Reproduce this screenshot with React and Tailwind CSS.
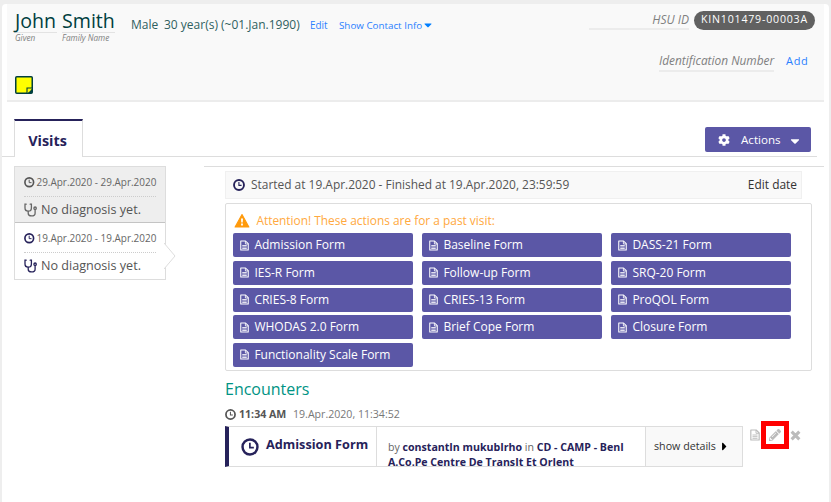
import React from 'react';
import { FaPencilAlt, FaCog, FaCaretDown, FaCaretRight } from 'react-icons/fa';

function Clock({ className, stroke = 2.2 }) {
  return (
    <svg viewBox="0 0 14 14" className={`shrink-0 ${className}`} fill="none" stroke="currentColor" strokeWidth={stroke}>
      <circle cx="7" cy="7" r="5.8" />
      <path d="M6.9 3.6V7.5H10" strokeWidth="1.3" />
    </svg>
  );
}

function FileText({ className }) {
  return (
    <svg viewBox="0 0 12 14" className={className} fill="none" stroke="currentColor" strokeWidth="1.4">
      <path d="M1 1h6.4L11 4.6V13H1z" strokeLinejoin="round" />
      <path d="M7.2 1v4H11M3 7h6M3 9h6M3 11h6" strokeWidth="1.1" />
    </svg>
  );
}

function Stethoscope({ className }) {
  return (
    <svg viewBox="0 0 13 14" className={`shrink-0 ${className}`} fill="none" stroke="currentColor" strokeWidth="1.3" strokeLinecap="round">
      <path d="M2.2 1.2H1V5a3.2 3.2 0 0 0 6.4 0V1.2H6.2" />
      <path d="M4.2 8.4v1.8c0 1.7 1.2 2.7 3.3 2.7s3.6-1 3.6-2.7V6.6" />
      <circle cx="11.1" cy="5.2" r="1.2" />
    </svg>
  );
}

function Cross({ className }) {
  return (
    <svg viewBox="0 0 12 12" className={className} fill="none" stroke="currentColor" strokeWidth="3.4">
      <path d="M1.8 1.8 10.2 10.2M10.2 1.8 1.8 10.2" />
    </svg>
  );
}

function Warning({ className }) {
  return (
    <svg viewBox="0 0 15 14" className={className}>
      <path d="M7.5.6 14.4 13H.6z" fill="#ff9a0c" stroke="#ff9a0c" strokeWidth="1.1" strokeLinejoin="round" />
      <path d="M6.5 4.4h2l-.3 4.2H6.8zM6.6 9.6h1.8v1.8H6.6z" fill="#fff" />
    </svg>
  );
}

function Note() {
  return (
    <svg viewBox="0 0 18 18" className="block size-[18px]">
      <rect x="0.75" y="0.75" width="16.5" height="16.5" rx="1" fill="#ff0" stroke="#003f3f" strokeWidth="1.5" />
      <path d="M17 12h-5v5" fill="#ff0" stroke="#003f3f" strokeWidth="1.1" />
      <path d="M17 13v4h-4z" fill="#003f3f" />
    </svg>
  );
}

const forms = [
  'Admission Form', 'Baseline Form', 'DASS-21 Form',
  'IES-R Form', 'Follow-up Form', 'SRQ-20 Form',
  'CRIES-8 Form', 'CRIES-13 Form', 'ProQOL Form',
  'WHODAS 2.0 Form', 'Brief Cope Form', 'Closure Form',
  'Functionality Scale Form',
];

function Header() {
  return (
    <header className="mx-[5px] flex h-[98px] justify-between border-b-2 border-[#ececec] bg-[#f9f9f9] pl-[7px]">
      <div className="flex flex-col">
        <div className="flex h-[72px] whitespace-nowrap text-[#003f3f]">
          <div className="mr-[5px] w-[43px] pt-[4px]">
            <div className="h-[25px] border-b border-[#e3e3e3] pl-px text-[19.6px] leading-[25px]">John</div>
            <div className="pl-px text-[8.2px] leading-[9px] text-[#808080] italic">Given</div>
          </div>
          <div className="w-[53px] pt-[4px]">
            <div className="h-[25px] border-b border-[#e3e3e3] text-[19.6px] leading-[25px]">Smith</div>
            <div className="text-[8.2px] leading-[9px] text-[#808080] italic">Family Name</div>
          </div>
          <div className="flex h-[30px] items-baseline pt-[12px] pl-[16px] text-[12px] leading-[18px] text-[#2f5f5f]">
            <span className="w-[33px]">Male</span>
            <span className="w-[146px]">30 year(s) (~01.Jan.1990)</span>
            <span className="w-[29px] text-[9.9px] text-[#2a7fff]">Edit</span>
            <span className="w-[84px] text-[9.8px] text-[#2a7fff]">Show Contact Info</span>
            <FaCaretDown className="-ml-px size-[12px] self-center text-[#007fff]" />
          </div>
        </div>
        <div className="pl-px"><Note /></div>
      </div>
      <div className="flex w-[240px] flex-col pr-[9px]">
        <div className="mt-[6px] flex items-center justify-end gap-[5px]">
          <div className="h-[20px] w-[100px] border-b-2 border-[#ececec] text-right text-[12px] leading-[20px] text-[#808080] italic">HSU ID</div>
          <div className="flex h-[19px] w-[121px] items-center justify-center rounded-full bg-[#616161] text-[10.6px] font-medium tracking-[0.8px] text-white">KIN101479-00003A</div>
        </div>
        <div className="mt-[20px] flex justify-end gap-[12px] pr-[7px] leading-[20px]">
          <div className="h-[22px] w-[115px] border-b-2 border-[#ececec] text-[11.9px] leading-[20px] whitespace-nowrap text-[#808080] italic">Identification Number</div>
          <div className="w-[22px] pt-[1px] text-[11px] tracking-[0.7px] text-[#2a7fff]">Add</div>
        </div>
      </div>
    </header>
  );
}

function Visit({ date, active }) {
  return (
    <div className={active ? 'relative h-[56px] bg-white px-[9px] text-[#26225a]' : 'h-[56px] border-b border-[#c4c4c4] bg-[#eee] px-[9px] text-[#666]'}>
      <div className="flex h-[30px] items-center gap-[2px] border-b border-dotted border-[#ccc] pt-[2px] text-[9.95px] text-[#666]">
        <Clock className={active ? 'size-[10.5px] text-[#26225a]' : 'size-[10.5px] text-[#555]'} />
        <span className="whitespace-nowrap">{date}</span>
      </div>
      <div className="flex h-[26px] items-center gap-[4px] text-[12.6px] text-[#555]">
        <Stethoscope className={active ? 'h-[14px] w-[13px] text-[#26225a]' : 'h-[14px] w-[13px] text-[#666]'} />
        <span className="pt-px">No diagnosis yet.</span>
      </div>
      {active && (
        <svg viewBox="0 0 12 28" className="absolute top-[19px] -right-[11px] h-[28px] w-[12px]">
          <path d="M0 1 11 14 0 27" fill="#fff" stroke="#ddd" />
        </svg>
      )}
    </div>
  );
}

function Encounter() {
  return (
    <div className="flex">
      <div className="flex h-[41px] w-[518px] overflow-hidden border border-l-[4px] border-[#ddd] border-l-[#26225a]">
        <div className="flex w-[148px] items-center border-r border-[#ddd] pl-[12px] text-[#26225a]">
          <Clock className="size-[18px]" stroke={1.9} />
          <span className="-mt-[4px] ml-[7px] text-[12.7px] font-bold whitespace-nowrap">Admission Form</span>
        </div>
        <div className="w-[268px] pt-[13px] pl-[11px] text-[10.6px] leading-[15px] whitespace-nowrap text-[#666]">
          <div>by <b className="text-[#26225a]">constantIn mukubIrho</b> in <b className="text-[#26225a]">CD - CAMP - BenI</b></div>
          <div><b className="text-[#26225a]">A.Co.Pe Centre De TransIt Et OrIent</b></div>
        </div>
        <div className="flex flex-1 items-center border-l border-[#ddd] bg-[#f9f9f9] pl-[8px] text-[10.7px] text-[#333]">
          <span className="w-[64px] whitespace-nowrap">show details</span>
          <FaCaretRight className="size-[13px] text-black" />
        </div>
      </div>
      <div className="-mt-[5px] ml-[7px] flex h-[28px] items-center text-[#bbb]">
        <FileText className="h-[12px] w-[10px]" />
        <div className="ml-[1px] flex h-[28px] w-[28px] items-center justify-center border-[5px] border-[#f00]">
          <FaPencilAlt className="size-[12px]" />
        </div>
        <Cross className="ml-[1px] size-[11px]" />
      </div>
    </div>
  );
}

export default function App() {
  return (
    <div className="h-[502px] w-[831px] overflow-hidden bg-[#eee] pt-[4px] pl-[2px] font-['Open_Sans','Noto_Sans',sans-serif]">
      <div className="h-[498px] w-[827px] rounded-t-[4px] bg-white">
        <Header />
        <div className="mt-[17px] flex h-[38px]">
          <div className="w-[12px] border-b border-[#ddd]" />
          <div className="flex w-[69px] items-center justify-center border-t-2 border-r border-l border-[#ddd] border-t-[#26225a] pt-[3px] pr-[2px] text-[14.4px] font-bold text-[#26225a]">Visits</div>
          <div className="flex w-[734px] justify-end border-b border-[#ddd] pr-[6px]">
            <div className="mt-[8px] flex h-[25px] w-[106px] items-center rounded-[2px] bg-[#5b57a6] pl-[13px] text-white">
              <FaCog className="size-[12px]" />
              <span className="ml-[11px] w-[47px] text-[11.6px]">Actions</span>
              <FaCaretDown className="mt-[2px] size-[14px]" />
            </div>
          </div>
        </div>
        <div className="flex pt-[9px] pl-[12px]">
          <aside className="h-[114px] w-[152px] border border-[#ddd]">
            <Visit date="29.Apr.2020 - 29.Apr.2020" />
            <Visit date="19.Apr.2020 - 19.Apr.2020" active />
          </aside>
          <main className="ml-[38px] w-[620px] border-t border-[#ddd] pl-[21px]">
            <div className="mt-[4px] flex h-[28px] w-[577px] items-center border border-[#f0f0f0] bg-[#f9f9f9] px-[7px] text-[11.93px] text-[#555]">
              <Clock className="size-[12px] text-[#26225a]" />
              <span className="ml-[6px] flex-1 whitespace-nowrap">Started at 19.Apr.2020 - Finished at 19.Apr.2020, 23:59:59</span>
              <span className="-mr-[3px] text-[#333]">Edit date</span>
            </div>
            <section className="mt-[4px] h-[168px] w-[587px] rounded-[2px] border border-[#ddd] pl-[7.4px]">
              <div className="flex h-[29.4px] items-center gap-[6px] pt-[4px] text-[11.9px] text-[#ffa940]">
                <Warning className="ml-px h-[14px] w-[16px]" />
                <span>Attention! These actions are for a past visit:</span>
              </div>
              <div className="grid grid-cols-[180px_180px_180px] gap-x-[9px] gap-y-[3.3px]">
                {forms.map((f) => (
                  <div key={f} className="flex h-[24px] items-center gap-[5px] rounded-[2px] bg-[#5b57a6] pl-[7px] text-[12px] text-white">
                    <FileText className="h-[11px] w-[9px]" />
                    <span className="whitespace-nowrap">{f}</span>
                  </div>
                ))}
              </div>
            </section>
            <h2 className="mt-[6px] h-[24px] text-[16px] leading-[24px] text-[#009384]">Encounters</h2>
            <div className="mt-[6px] mb-[4px] flex h-[15px] items-center text-[10.6px] text-[#777]">
              <Clock className="size-[11px] text-[#555]" />
              <b className="ml-[3px] w-[54px] text-[#555]">11:34 AM</b>
              <span>19.Apr.2020, 11:34:52</span>
            </div>
            <Encounter />
          </main>
        </div>
      </div>
    </div>
  );
}
